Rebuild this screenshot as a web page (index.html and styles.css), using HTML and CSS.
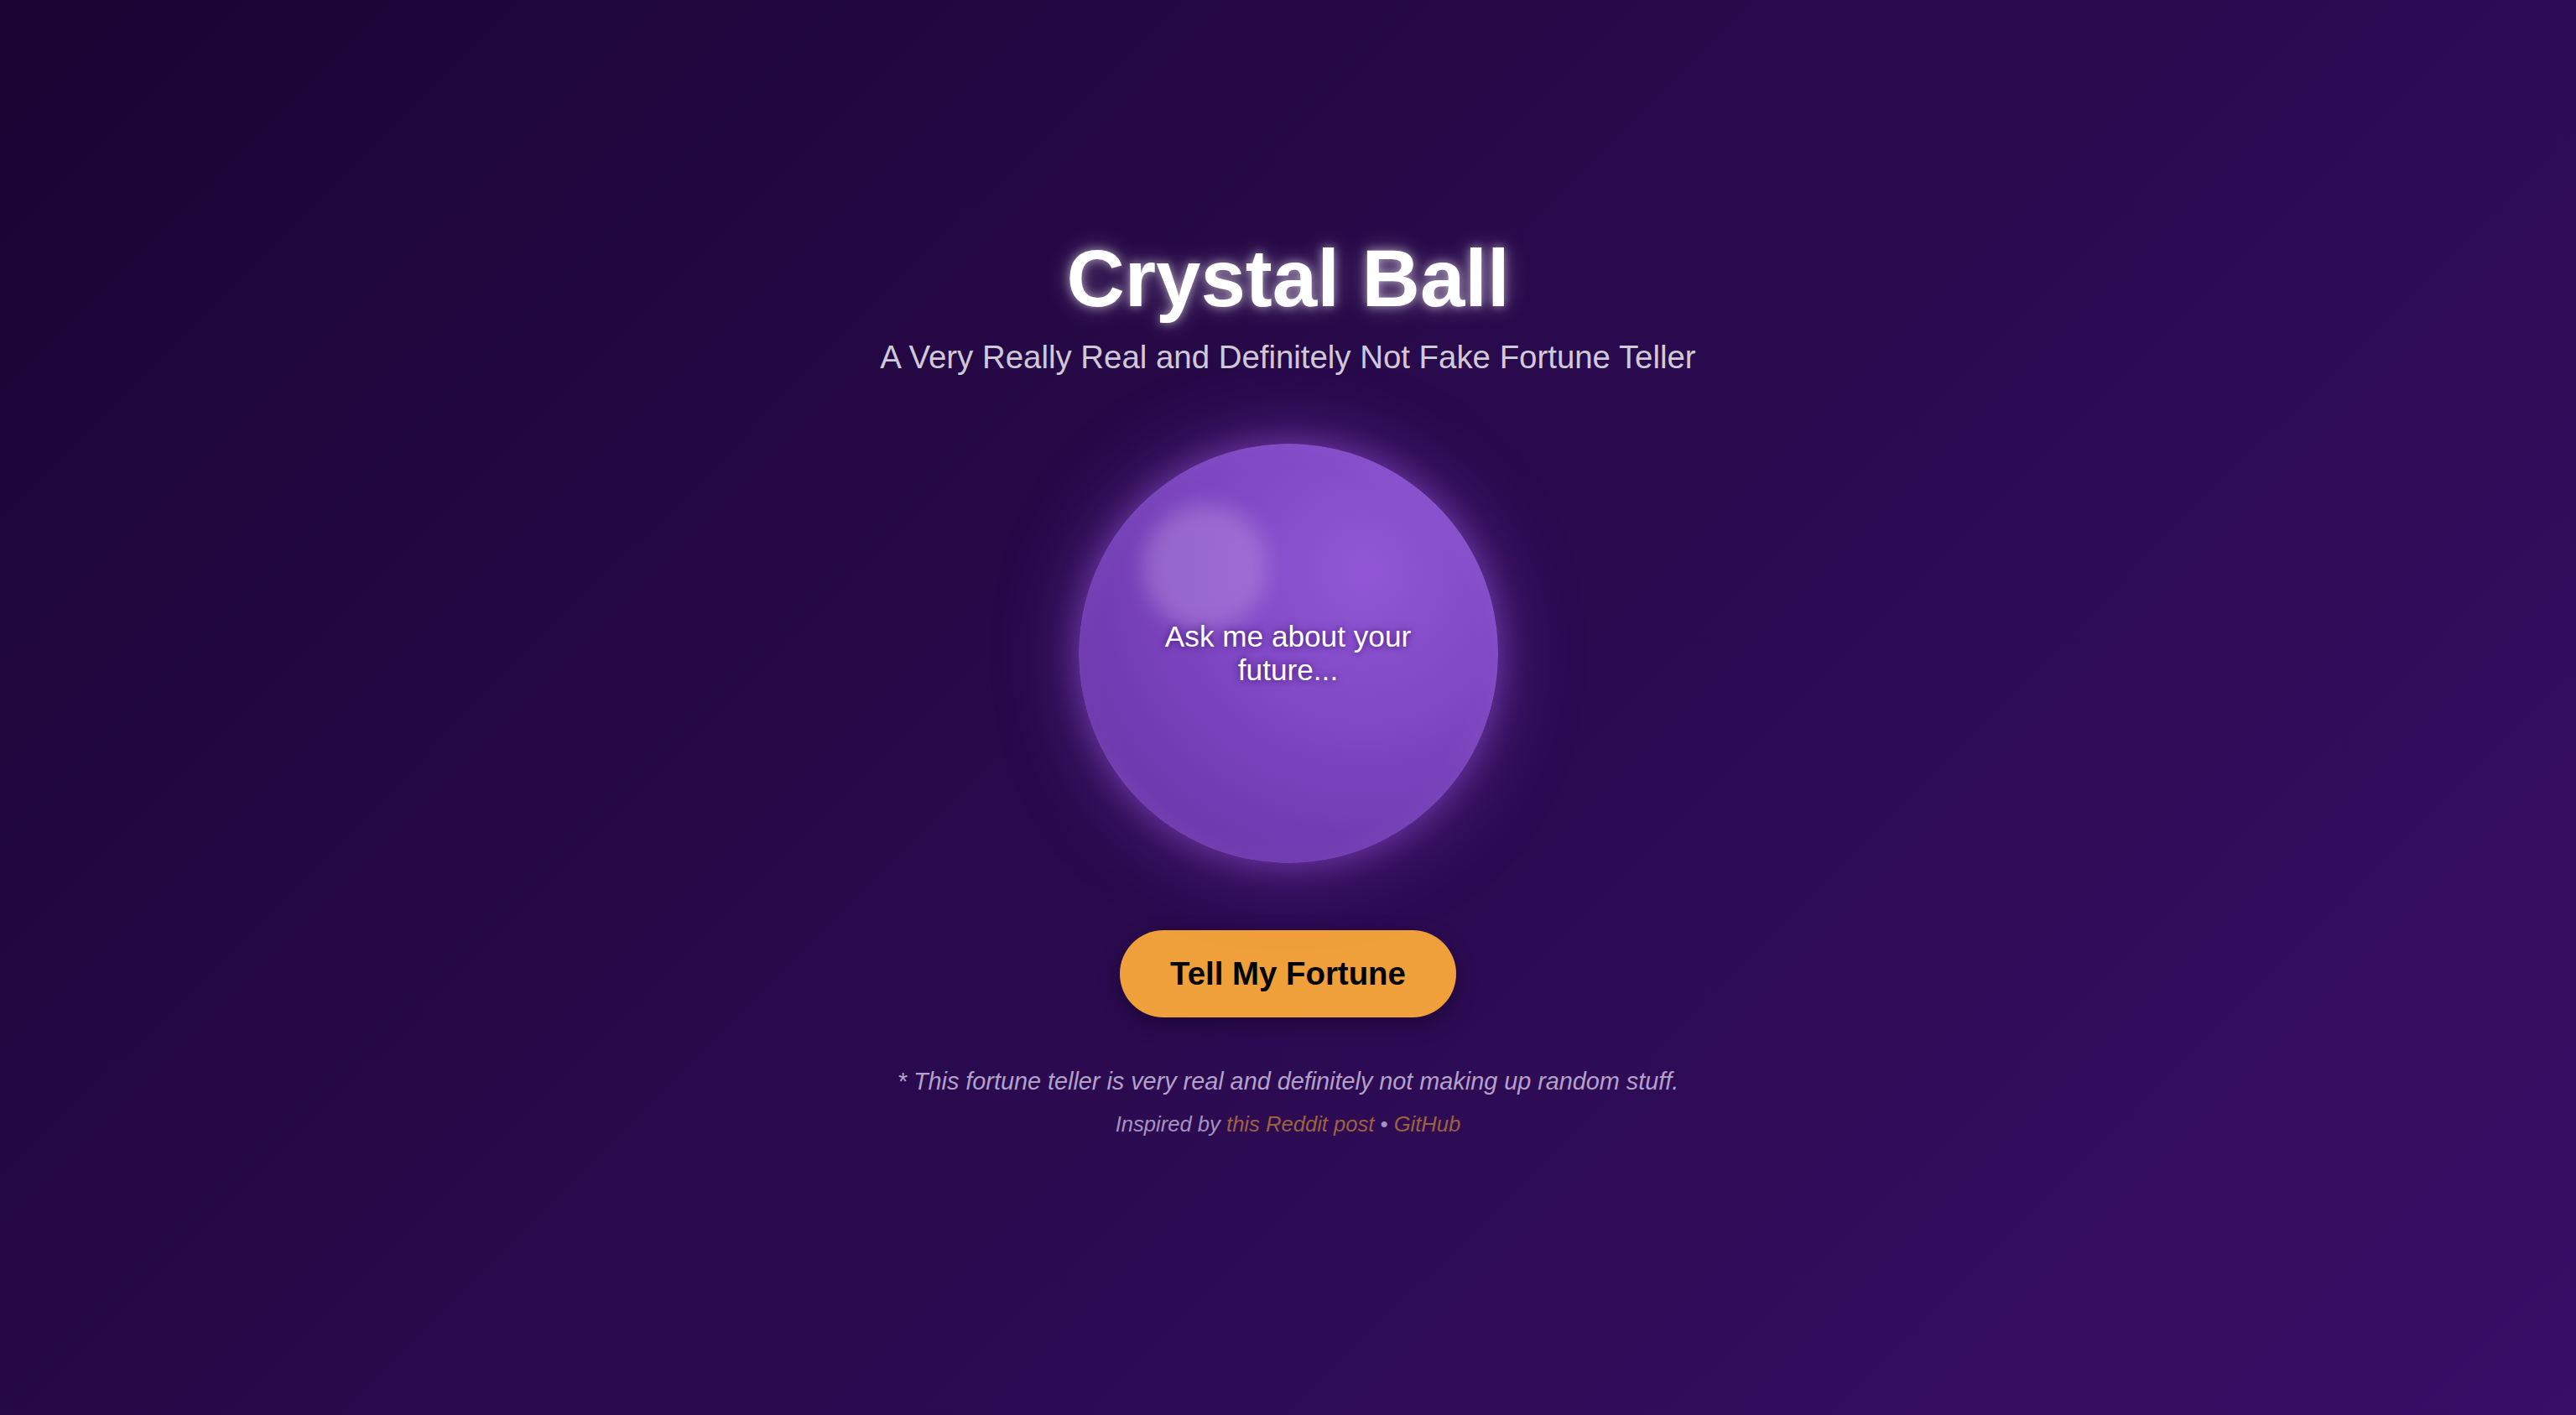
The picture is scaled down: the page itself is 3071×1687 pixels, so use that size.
FILE: index.html
```html
<!DOCTYPE html>
<html lang="en">
<head>
<meta charset="utf-8">
<title>Crystal Ball</title>
<link rel="stylesheet" href="styles.css">
</head>
<body>
<main class="page">
  <h1 class="title">Crystal Ball</h1>
  <p class="subtitle">A Very Really Real and Definitely Not Fake Fortune Teller</p>
  <div class="ball">
    <div class="ball-highlight"></div>
    <p class="ball-text">Ask me about your future...</p>
  </div>
  <button class="fortune-btn" type="button">Tell My Fortune</button>
  <p class="disclaimer">* This fortune teller is very real and definitely not making up random stuff.</p>
  <p class="credits">Inspired by <a href="#">this Reddit post</a> • <a href="#">GitHub</a></p>
</main>
</body>
</html>
```

FILE: styles.css
```css
html, body {
  margin: 0;
  padding: 0;
}

body {
  min-height: 100vh;
  font-family: "Liberation Sans", Arial, Helvetica, sans-serif;
  background: linear-gradient(135deg, #1a0433 0%, #2a0a4e 50%, #380e66 100%);
  color: #ffffff;
}

.page {
  display: flex;
  flex-direction: column;
  align-items: center;
  padding-top: 277px;
  text-align: center;
}

.title {
  margin: 0;
  font-size: 96px;
  font-weight: 700;
  color: #ffffff;
  text-shadow: 0 0 12px rgba(255, 255, 255, 0.55), 0 0 28px rgba(255, 255, 255, 0.35);
}

.subtitle {
  margin: 17px 0 0;
  font-size: 38.4px;
  color: rgba(255, 255, 255, 0.8);
}

.ball {
  position: relative;
  margin-top: 81px;
  width: 500px;
  height: 500px;
  border-radius: 50%;
  display: flex;
  align-items: center;
  justify-content: center;
  padding: 0 64px;
  box-sizing: border-box;
  background: radial-gradient(circle at 68% 30%, #9157d6 0%, #8149c6 35%, #6d39ae 75%, #7443b4 100%);
  box-shadow: 0 0 90px rgba(150, 80, 220, 0.5), 0 0 35px rgba(150, 90, 220, 0.45), inset 0 0 40px rgba(255, 255, 255, 0.06);
  overflow: hidden;
}

.ball-highlight {
  position: absolute;
  left: 76px;
  top: 72px;
  width: 150px;
  height: 150px;
  border-radius: 50%;
  background: rgba(200, 170, 230, 0.35);
  filter: blur(12px);
}

.ball-text {
  position: relative;
  margin: 0;
  font-size: 35.2px;
  color: #ffffff;
  text-shadow: 0 0 8px rgba(40, 0, 80, 0.75);
}

.fortune-btn {
  margin-top: 80px;
  padding: 30px 60px;
  border: none;
  border-radius: 60px;
  background: #f0a03a;
  color: #000000;
  font-family: "Liberation Sans", Arial, Helvetica, sans-serif;
  font-size: 38.4px;
  font-weight: 700;
  box-shadow: 0 8px 24px rgba(10, 0, 25, 0.45);
  cursor: pointer;
}

.disclaimer {
  margin: 60px 0 0;
  font-size: 28.8px;
  font-style: italic;
  color: #b3a1ca;
}

.credits {
  margin: 20px 0 0;
  font-size: 25.6px;
  font-style: italic;
  color: #a593bd;
}

.credits a {
  color: #9c6240;
  text-decoration: none;
}
```
